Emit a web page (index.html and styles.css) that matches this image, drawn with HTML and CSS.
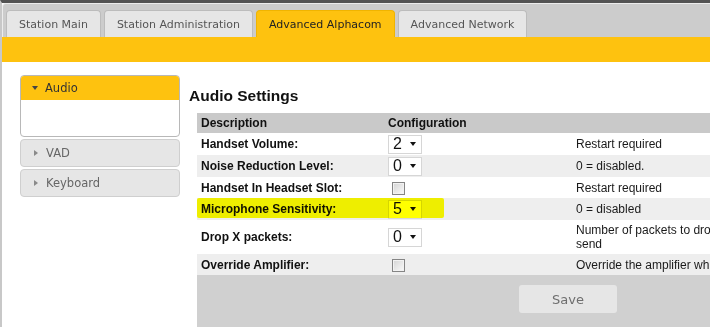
FILE: index.html
```html
<!DOCTYPE html>
<html lang="en">
<head>
    <meta charset="UTF-8">
    <meta name="viewport" content="width=device-width, initial-scale=1.0">
    <title>Advanced Alphacom</title>
    <link rel="stylesheet" href="styles.css">
</head>
<body>
    <div class="window">
        <!-- Tabs -->
        <nav class="tabbar">
            <a class="tab">Station Main</a>
            <a class="tab">Station Administration</a>
            <a class="tab active">Advanced Alphacom</a>
            <a class="tab">Advanced Network</a>
        </nav>
        <div class="strip"></div>

        <div class="content">
            <!-- Left menu -->
            <aside class="accordion">
                <div class="acc-item open">
                    <div class="acc-head"><span class="caret down"></span>Audio</div>
                    <div class="acc-body"></div>
                </div>
                <div class="acc-item">
                    <div class="acc-head"><span class="caret right"></span>VAD</div>
                </div>
                <div class="acc-item">
                    <div class="acc-head"><span class="caret right"></span>Keyboard</div>
                </div>
            </aside>

            <!-- Settings -->
            <section class="panel">
                <h2>Audio Settings</h2>
                <div class="settings">
                    <table class="grid">
                        <thead>
                            <tr>
                                <th class="c-desc">Description</th>
                                <th class="c-conf">Configuration</th>
                                <th class="c-note"></th>
                            </tr>
                        </thead>
                        <tbody>
                            <tr>
                                <td class="label">Handset Volume:</td>
                                <td><span class="select">2<i></i></span></td>
                                <td>Restart required</td>
                            </tr>
                            <tr>
                                <td class="label">Noise Reduction Level:</td>
                                <td><span class="select">0<i></i></span></td>
                                <td>0 = disabled.</td>
                            </tr>
                            <tr class="short">
                                <td class="label">Handset In Headset Slot:</td>
                                <td><span class="check"></span></td>
                                <td>Restart required</td>
                            </tr>
                            <tr>
                                <td class="label">Microphone Sensitivity:</td>
                                <td><span class="select">5<i></i></span></td>
                                <td>0 = disabled</td>
                            </tr>
                            <tr class="tall">
                                <td class="label">Drop X packets:</td>
                                <td><span class="select">0<i></i></span></td>
                                <td>Number of packets to drop before send</td>
                            </tr>
                            <tr class="short">
                                <td class="label">Override Amplifier:</td>
                                <td><span class="check"></span></td>
                                <td>Override the amplifier when used</td>
                            </tr>
                        </tbody>
                    </table>
                    <div class="footer">
                        <button class="save">Save</button>
                    </div>
                    <!-- marker stroke over the row -->
                    <div class="marker"></div>
                </div>
            </section>
        </div>
    </div>
</body>
</html>
```

FILE: styles.css
```css
* {
    margin: 0;
    padding: 0;
    box-sizing: border-box;
}

html, body {
    width: 710px;
    height: 327px;
    overflow: hidden;
    background: #FFFFFF;
}

body {
    font-family: 'Liberation Sans', Arial, sans-serif;
    font-size: 12px;
    color: #111111;
}

.window {
    min-height: 100vh;
    width: 1000px;
    border-top: 3px solid #535353;
    border-left: 2px solid #c8c8c8;
}

/* Tabs */
.tabbar {
    display: flex;
    gap: 3px;
    padding: 6px 0 0 3px;
    background: #cccccc;
    border-top: 1px solid #ececec;
    border-left: 1px solid #ececec;
    border-top-left-radius: 4px;
}

.tab {
    height: 27px;
    padding: 0 12px;
    line-height: 27px;
    font-family: 'DejaVu Sans', Verdana, sans-serif;
    font-size: 11px;
    color: #555555;
    background: #e6e6e6;
    border: 1px solid #bcbcbc;
    border-bottom: none;
    border-radius: 4px 4px 0 0;
}

.tab.active {
    background: #fec20f;
    border-color: #f0b400;
    color: #222222;
}

.strip {
    height: 25px;
    background: #fec20f;
}

.content {
    display: flex;
    align-items: flex-start;
    padding: 13px 0 0 18px;
}

/* Left menu */
.accordion {
    width: 160px;
    flex-shrink: 0;
    margin-right: 9px;
    display: flex;
    flex-direction: column;
    gap: 2px;
}

.acc-item {
    border: 1px solid #cfcfcf;
    border-radius: 4px;
    overflow: hidden;
    background: #e6e6e6;
}

.acc-item.open {
    border-color: #b8b8b8;
    background: #FFFFFF;
}

.acc-head {
    display: flex;
    align-items: center;
    height: 26px;
    padding-left: 13px;
    font-family: 'DejaVu Sans', Verdana, sans-serif;
    font-size: 11.5px;
    color: #666666;
}

.open .acc-head {
    height: 24px;
    padding-left: 11px;
    background: #fec20f;
    color: #333333;
}

.acc-body {
    height: 36px;
}

.caret {
    width: 0;
    height: 0;
    border-style: solid;
}

.caret.down {
    border-width: 4px 3.5px 0 3.5px;
    border-color: #444444 transparent transparent transparent;
    margin-right: 7px;
}

.caret.right {
    border-width: 3.5px 0 3.5px 4px;
    border-color: transparent transparent transparent #8a8a8a;
    margin-right: 8px;
}

/* Settings */
.panel {
    flex-shrink: 0;
}

.panel h2 {
    margin: 12px 0 8px;
    font-size: 15.5px;
    line-height: 18px;
    font-weight: bold;
    color: #111111;
}

.settings {
    position: relative;
    margin-left: 8px;
    width: 742px;
}

.grid {
    border-collapse: collapse;
    table-layout: fixed;
    width: 575px;
}

.c-desc { width: 187px; }
.c-conf { width: 188px; }
.c-note { width: 200px; }

.grid th {
    height: 20px;
    padding: 0 4px;
    text-align: left;
    font-weight: bold;
    background: #c9c9c9;
    color: #111111;
}

.grid tbody tr {
    height: 22px;
}

.grid tbody tr.short {
    height: 21px;
}

.grid tbody tr:nth-child(even) {
    background: #eeeeee;
}

.grid td {
    padding: 0 4px;
    line-height: 14px;
    vertical-align: middle;
    color: #1a1a1a;
}

.grid tr.tall td {
    padding-top: 3px;
    padding-bottom: 3px;
}

.grid td.label {
    font-weight: bold;
    color: #111111;
}

.select {
    display: inline-flex;
    align-items: center;
    width: 34px;
    height: 19px;
    padding-left: 4px;
    vertical-align: middle;
    font-size: 16px;
    color: #111111;
    background: #FFFFFF;
    border: 1px solid #d6d6d6;
}

.select i {
    width: 0;
    height: 0;
    margin-left: 8px;
    border-style: solid;
    border-width: 4px 3.5px 0 3.5px;
    border-color: #111111 transparent transparent transparent;
}

.check {
    display: inline-block;
    width: 13px;
    height: 13px;
    margin-left: 4px;
    vertical-align: middle;
    border: 1px solid #858585;
    box-shadow: inset 0 0 0 1px #f2f2f2;
    background: linear-gradient(135deg, #d4d4d4, #fafafa);
}

.footer {
    height: 60px;
    padding: 10px 0 0 322px;
    background: #d0d0d0;
}

.save {
    width: 98px;
    height: 28px;
    font-family: 'DejaVu Sans', Verdana, sans-serif;
    font-size: 13px;
    color: #6e6e6e;
    background: #e6e6e6;
    border: none;
    border-radius: 3px;
}

.marker {
    position: absolute;
    left: 0;
    top: 85px;
    width: 247px;
    height: 20px;
    border-radius: 2px;
    background: #ffff00;
    mix-blend-mode: multiply;
}
```
